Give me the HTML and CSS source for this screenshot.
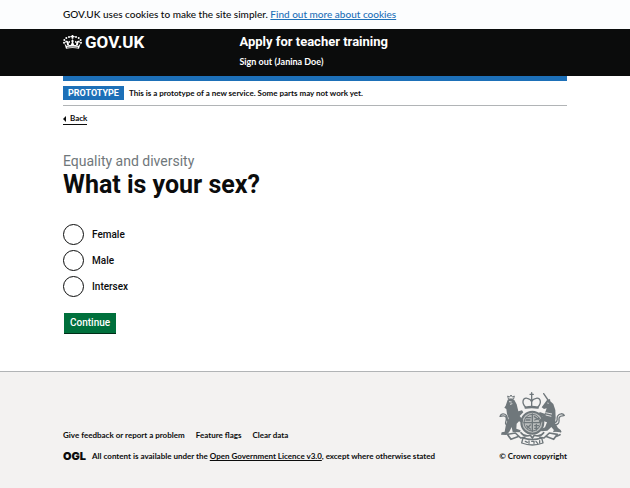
FILE: index.html
```html
<!DOCTYPE html>
<html lang="en">
<head>
<meta charset="utf-8">
<meta name="viewport" content="width=device-width, initial-scale=1">
<title>What is your sex? - Apply for teacher training - GOV.UK</title>
<link rel="stylesheet" href="styles.css">
</head>
<body>
<div class="cookie-banner">
  <p class="container">GOV.UK uses cookies to make the site simpler. <a href="#cookies">Find out more about cookies</a></p>
</div>
<header class="header">
  <div class="container header-grid">
    <a class="logo" href="#home">
      <svg class="logo-crown" viewBox="0 0 57 42" aria-hidden="true">
        <g fill="#fff">
          <path d="M26 0h5v3h4v4h-4v4h-5V7h-4V3h4z"/>
          <circle cx="18" cy="6" r="3"/><circle cx="39" cy="6" r="3"/>
          <circle cx="10" cy="9" r="3"/><circle cx="47" cy="9" r="3"/>
          <circle cx="4" cy="15" r="3"/><circle cx="53" cy="15" r="3"/>
          <circle cx="3" cy="23" r="3"/><circle cx="54" cy="23" r="3"/>
          <path d="M28.500 13l4 5-2 4 3 8h-10l3-8-2-4z"/>
          <path d="M12 17l5 3 4-3v7l-4-2 1 8h-6l-1-8-4 2v-7zM45 17l-5 3-4-3v7l4-2-1 8h6l1-8 4 2v-7z"/>
          <path d="M4 24l6 8q18.500-5 37 0l6-8-5 17q-19.500-4-39 0z"/>
        </g>
        <path d="M12 37q16.500-3 33 0" fill="none" stroke="#0b0c0c" stroke-width="2"/>
      </svg>
      <span>GOV.UK</span>
    </a>
    <div>
      <a class="service-name" href="#service">Apply for teacher training</a>
      <a class="sign-out" href="#sign-out">Sign out (Janina Doe)</a>
    </div>
  </div>
</header>
<div class="container page">
  <div class="phase-banner">
    <strong class="tag">PROTOTYPE</strong>
    <span>This is a prototype of a new service. Some parts may not work yet.</span>
  </div>
  <a class="back-link" href="#back">Back</a>
  <main>
    <form>
      <fieldset class="question">
        <legend>
          <span class="caption">Equality and diversity</span>
          <h1>What is your sex?</h1>
        </legend>
        <div class="option"><input type="radio" name="sex" id="female"><label for="female">Female</label></div>
        <div class="option"><input type="radio" name="sex" id="male"><label for="male">Male</label></div>
        <div class="option"><input type="radio" name="sex" id="intersex"><label for="intersex">Intersex</label></div>
      </fieldset>
      <button class="button" type="button">Continue</button>
    </form>
  </main>
</div>
<footer class="footer">
  <div class="container footer-row">
    <div>
      <nav class="footer-links">
        <a href="#feedback">Give feedback or report a problem</a>
        <a href="#flags">Feature flags</a>
        <a href="#clear">Clear data</a>
      </nav>
      <div class="licence">
        <span class="ogl">OGL</span>
        <span>All content is available under the <a href="#licence">Open Government Licence v3.0</a>, except where otherwise stated</span>
      </div>
    </div>
    <a class="copyright" href="#copyright">
      <svg class="crest" viewBox="12 10 198 162" aria-hidden="true">
        <circle cx="112" cy="102" r="33" fill="#b9bcbc"/>
        <g fill="none" stroke="#6f777b" stroke-width="4" stroke-linecap="round" stroke-linejoin="round">
          <path d="M92 56C78 42 84 26 97 29q10 2 13 10 3-8 13-10c13-3 19 13 5 27M110 24v30M110 12v12M105 17h10" stroke-width="4"/>
          <path d="M92 57q18-4 36 0" stroke-width="7"/>
          <circle cx="112" cy="102" r="33" stroke-width="6"/>
          <circle cx="112" cy="102" r="25" stroke-width="3"/>
          <path d="M112 76v52M87 102h50M93 87h14M93 94h12M118 84l12 8M119 94l13-5M95 111l11 10M106 109l-9 9M119 111h12M119 119h9M124 107v17" stroke-width="4"/>
          <path d="M42 110c-20-2-4-13-9-24-4-9-14-2-18-3 3-10 14-9 19-3 7 9-2 19 9 20" stroke-width="4"/>
          <path d="M181 109c18-5 8-15 12-23 4-7 12-3 15-6-4-6-15-7-20 2-5 10 4 14-8 20" stroke-width="4"/>
          <path d="M146 15l13 19" stroke-width="4"/>
          <path d="M40 30l-2-8 6 3 4-6 4 6 6-3-2 8z" stroke-width="3"/>
          <path d="M37 137l24-4 16 15 12-2M37 137l11 15 24-9M187 137l-24-4-16 15-12-2M187 137l-11 15-24-9" stroke-width="5"/>
          <path d="M84 148q28 9 56 0l4 15q-32 12-64 0zM91 158l6 3M102 157v7M110 158h7v6M123 158l5 6M134 156v6" stroke-width="4"/>
          <path d="M78 132q10 14 28 8l6 8 6-8q18 6 28-8M177 128q14-7 20 1M185 143l10-5" stroke-width="5"/>
        </g>
        <g fill="#6f777b">
          <path d="M38 33q10-6 20 1l7 13 5 21 11-3 4 6-11 11 10 13-2 8-10-5-7 7-1 15 13 5-2 6-22-1-3-15-7 14-9 10-16-1 2-7 9-2 4-22 8-18-5-13-2-15-6-4 4-6z"/>
          <path d="M156 34l9-3 1 7 9 8 6 18 1 23-2 16 9 15 9 7-2 6-15-2-12-14-12 11-18 2-2-6 13-6 6-15-12-4-9 6-4-7 12-12-12-7 3-7 15 5 6-16-8 2-7-5z"/>
        </g>
        <path d="M42 39l8 1M45 47l7-2M157 43l4 1M151 72l20 4M152 79l17 4" fill="none" stroke="#f3f2f1" stroke-width="2.500"/>
      </svg>
      <span>© Crown copyright</span>
    </a>
  </div>
</footer>
</body>
</html>
```
FILE: styles.css
```css
* { box-sizing: border-box; }

body {
  margin: 0;
  min-height: 100vh;
  display: flex;
  flex-direction: column;
  background: #fff;
  color: #0b0c0c;
  font-family: Roboto, "Liberation Sans", sans-serif;
  font-size: 10px;
  line-height: 13px;
  font-weight: 500;
}

a { color: inherit; }

.container {
  width: 80%;
  margin: 0 auto;
}

.cookie-banner {
  padding: 8px 0;
  background: #fcfdfe;
  font-family: Lato, sans-serif;
}

.cookie-banner a { color: #1d70b8; }

.header {
  padding: 4px 0 8px;
  background: #0b0c0c;
  color: #fff;
}

.header a { text-decoration: none; }

.header-grid {
  display: grid;
  grid-template-columns: 35% 1fr;
}

.logo {
  display: flex;
  align-self: start;
  align-items: center;
  gap: 3px;
  font-size: 17px;
  line-height: 18px;
  font-weight: 700;
}

.logo-crown {
  width: 19px;
  height: 14px;
}

.service-name {
  display: block;
  font-size: 13px;
  line-height: 18px;
  font-weight: 700;
}

.sign-out {
  display: block;
  width: fit-content;
  margin-top: 5px;
  font-family: Lato, sans-serif;
  font-size: 9px;
  line-height: 12px;
  font-weight: 700;
}

.page { border-top: 5px solid #1d70b8; }

.phase-banner {
  display: flex;
  align-items: center;
  gap: 5px;
  padding: 5px 0;
  border-bottom: 1px solid #b1b4b6;
  font-family: Lato, sans-serif;
  font-size: 8px;
  line-height: 14px;
  font-weight: 700;
}

.tag {
  padding: 0 5px;
  background: #1d70b8;
  color: #fff;
  font-family: Roboto, sans-serif;
  font-size: 9px;
  font-weight: 700;
}

.back-link {
  display: flex;
  align-items: center;
  gap: 4px;
  width: fit-content;
  margin-top: 7px;
  border-bottom: 1px solid #0b0c0c;
  font-family: Lato, sans-serif;
  font-size: 8px;
  line-height: 11px;
  font-weight: 700;
  text-decoration: none;
}

.back-link::before {
  content: "";
  border: 3px solid transparent;
  border-left: 0;
  border-right-color: #0b0c0c;
}

main { padding: 27px 0 37px; }

.question {
  min-width: 0;
  margin: 0 0 16px;
  padding: 0;
  border: 0;
}

.question legend {
  margin-bottom: 25px;
  padding: 0;
}

.caption {
  display: block;
  color: #6f777b;
  font-size: 14px;
  line-height: 18px;
  font-weight: 400;
}

h1 {
  margin: 0;
  font-size: 25px;
  line-height: 29px;
  font-weight: 700;
}

.option {
  display: flex;
  align-items: center;
  gap: 8px;
}

.option + .option { margin-top: 5px; }

.option input {
  appearance: none;
  width: 21px;
  height: 21px;
  margin: 0;
  border: 1px solid #0b0c0c;
  border-radius: 50%;
  background: #fff;
}

.option input:checked {
  background: #0b0c0c;
  box-shadow: inset 0 0 0 4px #fff;
}

.button {
  display: block;
  margin-left: 1px;
  padding: 4px 6px;
  border: 0;
  border-bottom: 1px solid #002d18;
  border-radius: 0;
  background: #00703c;
  color: #fff;
  font: inherit;
  line-height: 12px;
}

.footer {
  flex: 1;
  padding: 20px 0;
  border-top: 1px solid #b1b4b6;
  background: #f3f2f1;
  font-family: Lato, sans-serif;
  font-size: 8px;
  font-weight: 700;
}

.footer-row {
  display: flex;
  align-items: flex-end;
  justify-content: space-between;
}

.footer-links {
  display: flex;
  gap: 11px;
  margin-bottom: 8px;
}

.footer-links a { text-decoration: none; }

.licence {
  display: flex;
  align-items: center;
  gap: 6px;
}

.ogl {
  font-family: Inter, sans-serif;
  font-size: 11px;
  font-weight: 900;
}

.copyright {
  display: flex;
  flex-direction: column;
  align-items: flex-start;
  gap: 4px;
  text-decoration: none;
}

.crest {
  width: 66px;
  height: 54px;
}
```
